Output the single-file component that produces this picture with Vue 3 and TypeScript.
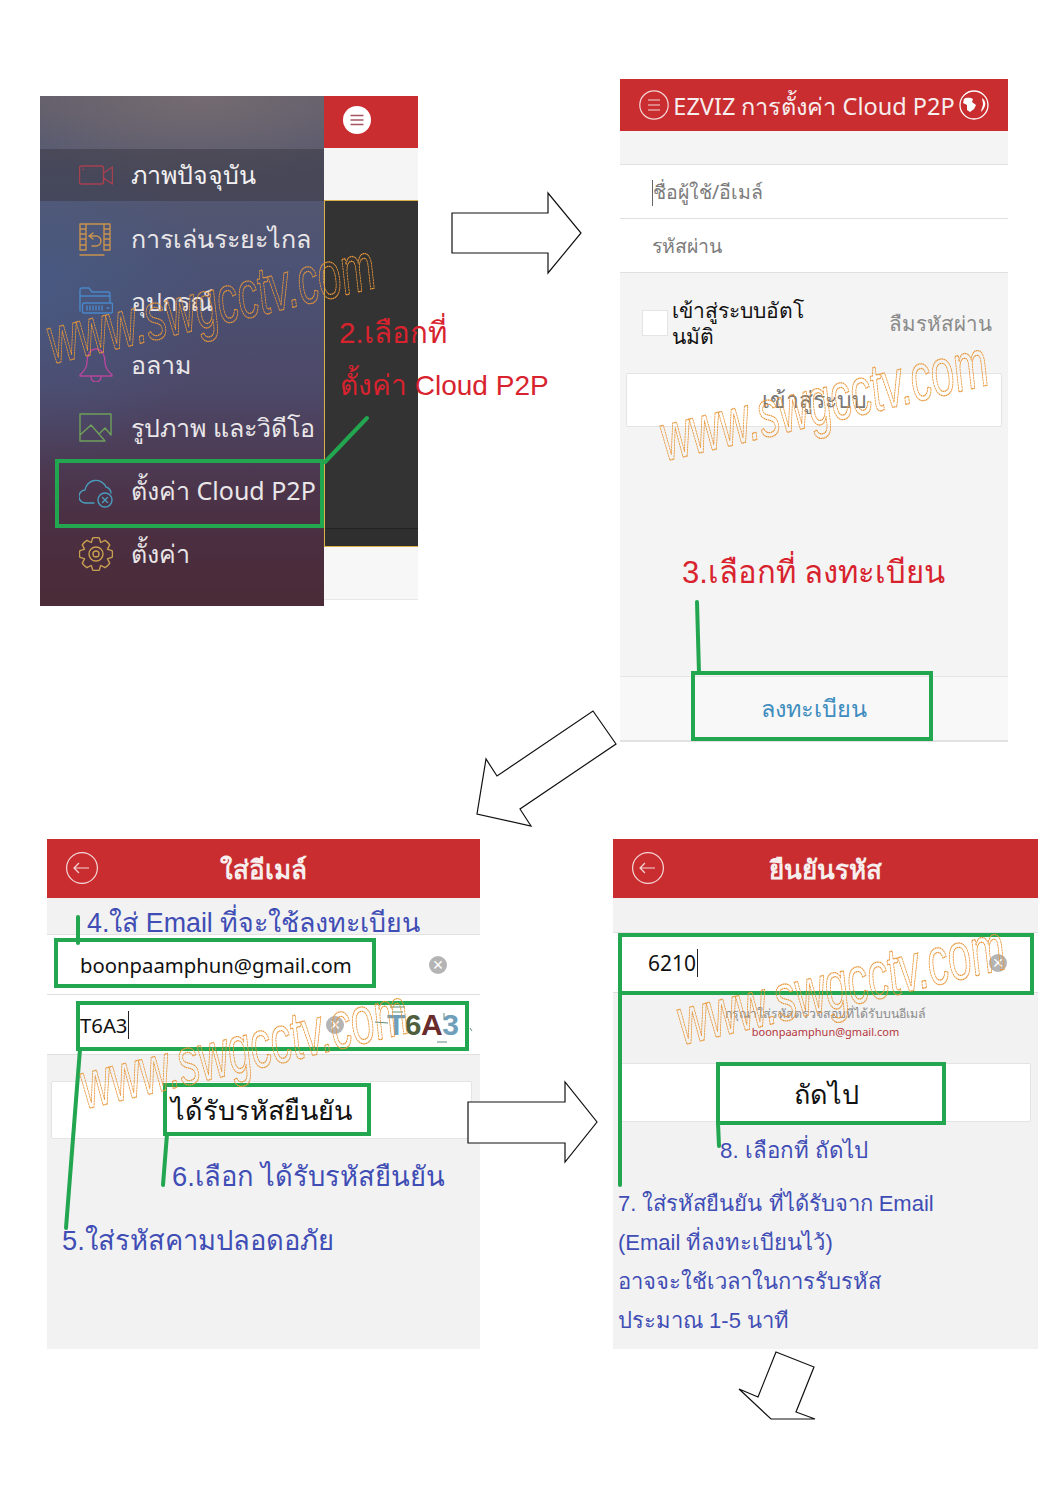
<template>
  <div class="page">
    <div class="row row-top">
      <section class="menu-shot">
        <nav class="sidebar">
          <div class="sidebar-top"></div>
          <div v-for="(item, i) in menu" :key="item.label" class="menu-row" :class="{ active: i === 0 }">
            <svg class="menu-icon" viewBox="0 0 34 34" fill="none" :stroke="item.color" stroke-width="1.4" stroke-linejoin="round" stroke-linecap="round">
              <path :d="item.d" />
            </svg>
            <span class="menu-label">{{ item.label }}</span>
          </div>
        </nav>
        <div class="behind">
          <div class="behind-head">
            <svg width="28" height="28" viewBox="0 0 28 28">
              <circle cx="14" cy="14" r="14" fill="#fff" />
              <path d="M7.5 9.5h13M7.5 14h13M7.5 18.5h13" stroke="#a5555f" stroke-width="1.4" />
            </svg>
          </div>
          <div class="behind-gap"></div>
          <div class="behind-dark"><div class="behind-strip"></div></div>
          <div class="behind-foot"></div>
        </div>
      </section>

      <section class="login-shot">
        <header class="red-bar login-bar">
          <svg class="round-icon" width="30" height="30" viewBox="0 0 30 30" fill="none" stroke="#f4d8d8" stroke-width="1.2">
            <circle cx="15" cy="15" r="14.2" />
            <path d="M9 10h12M9 15h12M9 20h12" />
          </svg>
          <span class="login-title">EZVIZ การตั้งค่า Cloud P2P</span>
          <svg class="round-icon" width="30" height="30" viewBox="0 0 30 30" fill="none">
            <circle cx="15" cy="15" r="14" stroke="#fff" stroke-width="1.3" />
            <path d="M5 9C8 7 12 8 14 9L13 12L17 15L15 19L11 22L8 20L8 15L4 13ZM23 8C26 10 27 13 26 16C25 19 23 21 22 22C22 19 24 17 24 14C24 12 23 10 23 8Z" fill="#fff" />
          </svg>
        </header>
        <div class="gap-band"></div>
        <div class="text-row"><span class="caret"></span>ชื่อผู้ใช้/อีเมล์</div>
        <div class="text-row">รหัสผ่าน</div>
        <div class="login-options">
          <span class="checkbox"></span>
          <span class="auto-label">เข้าสู่ระบบอัตโ<br />นมัติ</span>
          <span class="forgot">ลืมรหัสผ่าน</span>
        </div>
        <div class="wide-btn login-btn">เข้าสู่ระบบ</div>
        <div class="login-foot">ลงทะเบียน</div>
      </section>
    </div>

    <div class="row row-bottom">
      <section class="email-shot">
        <header class="red-bar title-bar">
          <svg class="back" width="32" height="32" viewBox="0 0 32 32" fill="none" stroke="#f4d8d8" stroke-width="1.2">
            <circle cx="16" cy="16" r="15.4" />
            <path d="M8 16h15M13 11l-5 5 5 5" />
          </svg>
          ใส่อีเมล์
        </header>
        <div class="gap-band short"></div>
        <div class="input-row email-row">
          <span class="typed">boonpaamphun@gmail.com</span>
          <span class="clear">×</span>
        </div>
        <div class="input-row captcha-row">
          <span class="typed">T6A3<span class="caret tall"></span></span>
          <span class="clear">×</span>
          <span class="captcha"><i class="c1">T</i><i class="c2">6</i><i class="c3">A</i><i class="c1">3</i></span>
        </div>
        <div class="wide-btn code-btn">ได้รับรหัสยืนยัน</div>
      </section>

      <section class="code-shot">
        <header class="red-bar title-bar">
          <svg class="back" width="32" height="32" viewBox="0 0 32 32" fill="none" stroke="#f4d8d8" stroke-width="1.2">
            <circle cx="16" cy="16" r="15.4" />
            <path d="M8 16h15M13 11l-5 5 5 5" />
          </svg>
          ยืนยันรหัส
        </header>
        <div class="gap-band shorter"></div>
        <div class="input-row code-row">
          <span class="typed">6210<span class="caret tall"></span></span>
          <span class="clear">×</span>
        </div>
        <p class="hint">กรุณาใส่รหัสตรวจสอบที่ได้รับบนอีเมล์<b>boonpaamphun@gmail.com</b></p>
        <div class="wide-btn next-btn">ถัดไป</div>
      </section>
    </div>

    <svg class="overlay" width="1064" height="1510" viewBox="0 0 1064 1510">
      <polygon v-for="a in arrows" :key="a" :points="a" fill="#fff" stroke="#111" stroke-width="1.2" />
      <!-- noise lines of the captcha image -->
      <path d="M390 1007h15M392 1012h11M375 1022l13 1M444 1013v6M437 1042h10M470 1028l2 3" fill="none" stroke="#5c8a7a" stroke-width="1" />
      <g fill="none" stroke="#22a64f" stroke-width="4">
        <rect v-for="b in boxes" :key="b.join()" :x="b[0]" :y="b[1]" :width="b[2]" :height="b[3]" />
        <path v-for="l in leaders" :key="l" :d="l" stroke-linecap="round" />
      </g>
      <text
        v-for="w in marks"
        :key="w"
        class="mark"
        :transform="`translate(${w}) rotate(-13.3) scale(0.622 1)`"
      >www.swgcctv.com</text>
    </svg>

    <div class="note red n2">2.เลือกที่</div>
    <div class="note red n2b">ตั้งค่า Cloud P2P</div>
    <div class="note red n3">3.เลือกที่ ลงทะเบียน</div>
    <div class="note blue n4">4.ใส่ Email ที่จะใช้ลงทะเบียน</div>
    <div class="note blue n5">5.ใส่รหัสคามปลอดอภัย</div>
    <div class="note blue n6">6.เลือก ได้รับรหัสยืนยัน</div>
    <div class="note blue n7">
      7. ใส่รหัสยืนยัน ที่ได้รับจาก Email<br />
      (Email ที่ลงทะเบียนไว้)<br />
      อาจจะใช้เวลาในการรับรหัส<br />
      ประมาณ 1-5 นาที
    </div>
    <div class="note blue n8">8. เลือกที่ ถัดไป</div>
  </div>
</template>

<script setup lang="ts">
// 8-tooth cog outline plus the two inner rings
function gear(cx: number, cy: number): string {
  let d = ''
  for (let i = 0; i < 8; i++) {
    const a = (i * Math.PI) / 4 - Math.PI / 2
    const pt = (r: number, off: number) =>
      `${(cx + r * Math.cos(a + off)).toFixed(1)} ${(cy + r * Math.sin(a + off)).toFixed(1)}`
    d += `${i ? 'L' : 'M'}${pt(12.5, -0.38)}L${pt(16.4, -0.2)}Q${pt(17, 0)} ${pt(16.4, 0.2)}L${pt(12.5, 0.38)}`
  }
  const ring = (r: number) => `M${cx - r} ${cy}a${r} ${r} 0 1 0 ${r * 2} 0a${r} ${r} 0 1 0 ${-r * 2} 0`
  return `${d}Z${ring(7)}${ring(3)}`
}

const menu = [
  {
    label: 'ภาพปัจจุบัน',
    color: '#a8404f',
    d: 'M2.5 8h20a2 2 0 0 1 2 2v14a2 2 0 0 1-2 2h-20a2 2 0 0 1-2-2V10a2 2 0 0 1 2-2zM24.5 15L33.5 9V26L24.5 20M4 11.5h.6',
  },
  {
    label: 'การเล่นระยะไกล',
    color: '#c9924f',
    d: 'M1 2H31V28H25V2M7 2V28H1V2M1 7h6M1 12h6M1 17h6M1 23h6M25 7h6M25 12h6M25 17h6M25 23h6M1 33H25M10 14l4-3M10 14l4 3M10 14h7a5 5 0 0 1 0 10h-4',
  },
  {
    label: 'อุปกรณ์',
    color: '#4a87c9',
    d: 'M1 26V5a2 2 0 0 1 2-2h7l3 4h16a2 2 0 0 1 2 2v8M1 11H31M5 18H32a1.5 1.5 0 0 1 1.5 1.5v7A1.5 1.5 0 0 1 32 28H5a1.5 1.5 0 0 1-1.5-1.5v-7A1.5 1.5 0 0 1 5 18zM8 21v4M11 21v4M14 21v4M17 21v4M20 21v4M23 21v4M28 23h2',
  },
  {
    label: 'อลาม',
    color: '#b5479c',
    d: 'M17 1c-6 0-9 6-9 13 0 7-4 10-7 13v1H33v-1c-3-3-7-6-7-13 0-7-3-13-9-13zM12 29a5 5 0 0 0 10 0',
  },
  {
    label: 'รูปภาพ และวิดีโอ',
    color: '#6fa05a',
    d: 'M1 3H32V24M1 3V30H26M1 24L12 14L26 30M20 23L26 17L32 24',
  },
  {
    label: 'ตั้งค่า Cloud P2P',
    color: '#4a9dbd',
    d: 'M15 29H7a6.5 6.5 0 0 1-1-13a11 11 0 0 1 21-3a7 7 0 0 1 5 6M19 26a7 7 0 1 0 14 0a7 7 0 1 0-14 0M23.500 23.500l5 5M28.500 23.500l-5 5',
  },
  { label: 'ตั้งค่า', color: '#c9a04f', d: gear(17, 17) },
]

const arrows = [
  '452,213 548,213 548,193 581,233 548,273 548,253 452,253',
  '593,711 616,744 520,809 531,826 477,814 486,759 497,776',
  '468,1102 565,1102 565,1082 597,1122 565,1162 565,1143 468,1143',
  '776,1352 814,1367 796,1412 815,1419 771,1419 739,1389 758,1397',
]

const boxes = [
  [57, 461, 265, 65],
  [693, 673, 238, 66],
  [56, 940, 318, 46],
  [78, 1003, 389, 46],
  [165, 1085, 204, 49],
  [620, 935, 412, 58],
  [718, 1064, 226, 59],
]

const leaders = [
  'M325 462L367 418',
  'M697 602L699 673',
  'M78 917V943',
  'M80 1049L66 1228',
  'M167 1134L163 1185',
  'M620 993V1185',
  'M718 1123L719 1146',
]

const marks = ['53 364', '666 461', '86 1109', '683 1045']
</script>

<style>
html,
body {
  background: #fff;
}
</style>

<style scoped>
.page {
  position: relative;
  width: 1064px;
  height: 1510px;
  overflow: hidden;
  background: #fff;
  font-family: 'Noto Sans', 'Liberation Sans', sans-serif;
}

.page * {
  box-sizing: border-box;
}

.row {
  display: flex;
  align-items: flex-start;
}

.row-top {
  padding: 79px 0 0 40px;
}

.row-bottom {
  padding: 97px 0 0 47px;
}

/* step 1: side menu */
.menu-shot {
  display: flex;
  width: 378px;
  height: 510px;
  margin-top: 17px;
}

.sidebar {
  display: flex;
  flex-direction: column;
  width: 284px;
  background:
    radial-gradient(ellipse 220px 90px at 55% 0, rgba(135, 120, 118, 0.55), transparent),
    radial-gradient(ellipse 170px 180px at 0 38%, rgba(70, 95, 140, 0.55), transparent),
    linear-gradient(180deg, #5f5c6a 0, #4b5274 34%, #4d4868 58%, #4b3044 82%, #4a2b37 100%);
}

.sidebar-top {
  height: 53px;
}

.menu-row {
  display: flex;
  align-items: center;
  gap: 18px;
  height: 63px;
  padding-left: 39px;
  color: #e9e6e8;
  font-size: 25px;
}

.menu-row.active {
  height: 52px;
  margin-bottom: 6px;
  background: rgba(60, 58, 70, 0.55);
  color: #f3f1f2;
  font-weight: 500;
}

.menu-icon {
  flex: none;
  width: 34px;
  height: 34px;
}

.menu-label {
  white-space: nowrap;
}

.behind {
  display: flex;
  flex-direction: column;
  width: 94px;
}

.behind-head {
  display: flex;
  align-items: center;
  height: 52px;
  padding: 0 0 4px 19px;
  background: #c92d30;
}

.behind-gap {
  height: 52px;
  background: #f5f5f5;
}

.behind-dark {
  display: flex;
  flex-direction: column;
  justify-content: flex-end;
  height: 347px;
  background: #333;
  border: 1px solid #d9b14d;
  border-right: 0;
}

.behind-strip {
  height: 18px;
  border-top: 1px solid #222;
  background: #2f2f2f;
}

.behind-foot {
  height: 53px;
  background: #f7f7f7;
  border-bottom: 1px solid #e8e8e8;
}

/* step 2 + 3: login */
.login-shot {
  display: flex;
  flex-direction: column;
  width: 388px;
  height: 663px;
  margin-left: 202px;
  background: #f4f4f4;
}

.red-bar {
  flex: none;
  display: flex;
  align-items: center;
  background: #c92d30;
  color: #f7eeee;
}

.login-bar {
  justify-content: space-between;
  height: 52px;
  padding: 0 19px;
}

.login-title {
  padding-top: 3px;
  font-size: 23.5px;
  white-space: nowrap;
}

.round-icon {
  flex: none;
}

.gap-band {
  height: 34px;
  border-bottom: 1px solid #e2e2e2;
}

.gap-band.short {
  height: 37px;
}

.gap-band.shorter {
  height: 35px;
}

.text-row {
  display: flex;
  align-items: center;
  height: 54px;
  padding: 2px 0 0 32px;
  background: #fff;
  border-bottom: 1px solid #e0e0e0;
  color: #7c7c7c;
  font-size: 19.5px;
}

.caret {
  width: 1px;
  height: 26px;
  background: #666;
}

.login-options {
  display: flex;
  align-items: center;
  gap: 4px;
  height: 100px;
  padding: 0 16px 0 22px;
}

.checkbox {
  flex: none;
  width: 26px;
  height: 26px;
  background: #fff;
  border: 1px solid #e4e4e4;
}

.auto-label {
  color: #111;
  font-size: 21px;
  line-height: 26px;
}

.forgot {
  margin-left: auto;
  color: #8a8a8a;
  font-size: 20.5px;
}

.wide-btn {
  display: flex;
  align-items: center;
  justify-content: center;
  background: #fff;
  border: 1px solid #e4e4e4;
  border-radius: 2px;
}

.login-btn {
  height: 54px;
  margin: 0 6px;
  color: #777;
  font-size: 23px;
}

.login-foot {
  display: flex;
  align-items: center;
  justify-content: center;
  height: 66px;
  margin-top: auto;
  background: #f8f8f8;
  border-top: 1px solid #e6e6e6;
  border-bottom: 2px solid #e2e2e2;
  color: #3f8dbf;
  font-size: 23.5px;
}

/* step 4-8: forms */
.email-shot,
.code-shot {
  display: flex;
  flex-direction: column;
  height: 510px;
  background: #f2f2f2;
}

.email-shot {
  width: 433px;
}

.code-shot {
  width: 425px;
  margin-left: 133px;
}

.title-bar {
  position: relative;
  justify-content: center;
  height: 59px;
  padding-top: 2px;
  font-size: 26px;
  font-weight: 600;
}

.back {
  position: absolute;
  left: 19px;
  top: 13px;
}

.input-row {
  display: flex;
  align-items: center;
  position: relative;
  height: 60px;
  background: #fff;
  border-bottom: 1px solid #dedede;
}

.typed {
  display: inline-flex;
  align-items: center;
  color: #111;
  font-size: 20.3px;
  white-space: nowrap;
}

.caret.tall {
  height: 28px;
  margin-left: 1px;
  background: #222;
}

.clear {
  display: flex;
  align-items: center;
  justify-content: center;
  position: absolute;
  width: 18px;
  height: 18px;
  border-radius: 50%;
  background: #b4b4b4;
  color: #fff;
  font: 18px/18px 'Liberation Sans', sans-serif;
}

.email-row .typed,
.captcha-row .typed {
  padding-left: 33px;
}

.email-row .clear {
  left: 382px;
  top: 21px;
}

.captcha-row .clear {
  left: 279px;
  top: 21px;
}

.captcha {
  position: absolute;
  left: 340px;
  top: 14px;
  letter-spacing: -0.5px;
  font: 700 30px/32px 'Liberation Sans', sans-serif;
}

.captcha i {
  font-style: normal;
}

.c1 {
  color: #6f9fba;
}

.c2 {
  color: #4f5f3e;
}

.c3 {
  color: #6a2b2d;
}

.code-btn {
  height: 58px;
  margin: 26px 8px 0 4px;
  color: #111;
  font-size: 27px;
}

.code-row .typed {
  padding-left: 35px;
  font-size: 21px;
}

.code-row .clear {
  left: 376px;
  top: 21px;
}

.hint {
  display: flex;
  flex-direction: column;
  align-items: center;
  height: 70px;
  margin: 0;
  padding-top: 12px;
  color: #8b8b8b;
  font-size: 12.3px;
  line-height: 18px;
}

.hint b {
  color: #b5363c;
  font-size: 11px;
  font-weight: 400;
}

.next-btn {
  height: 59px;
  margin: 0 7px 0 8px;
  padding-top: 3px;
  color: #111;
  font-size: 27px;
}

/* overlay: arrows, call-out boxes, watermark */
.overlay {
  position: absolute;
  left: 0;
  top: 0;
  pointer-events: none;
}

.mark {
  fill: none;
  stroke: #e8973a;
  stroke-width: 1.3;
  stroke-dasharray: 1.2 1.6;
  stroke-linecap: round;
  font: italic 400 67px 'Liberation Sans', sans-serif;
}

.note {
  position: absolute;
  white-space: nowrap;
  font-family: 'Liberation Sans', 'Noto Sans', sans-serif;
}

.red {
  color: #d8232e;
}

.blue {
  color: #3f4db5;
}

.n2 {
  left: 339px;
  top: 309px;
  font-size: 29.5px;
}

.n2b {
  left: 340px;
  top: 363px;
  font-size: 28px;
}

.n3 {
  left: 682px;
  top: 547px;
  font-size: 31px;
}

.n4 {
  left: 87px;
  top: 901px;
  font-size: 26.8px;
}

.n5 {
  left: 62px;
  top: 1219px;
  font-size: 27.3px;
}

.n6 {
  left: 172px;
  top: 1155px;
  font-size: 27.3px;
}

.n7 {
  left: 618px;
  top: 1184px;
  font-size: 22px;
  line-height: 39px;
}

.n8 {
  left: 720px;
  top: 1132px;
  font-size: 22.3px;
}
</style>
